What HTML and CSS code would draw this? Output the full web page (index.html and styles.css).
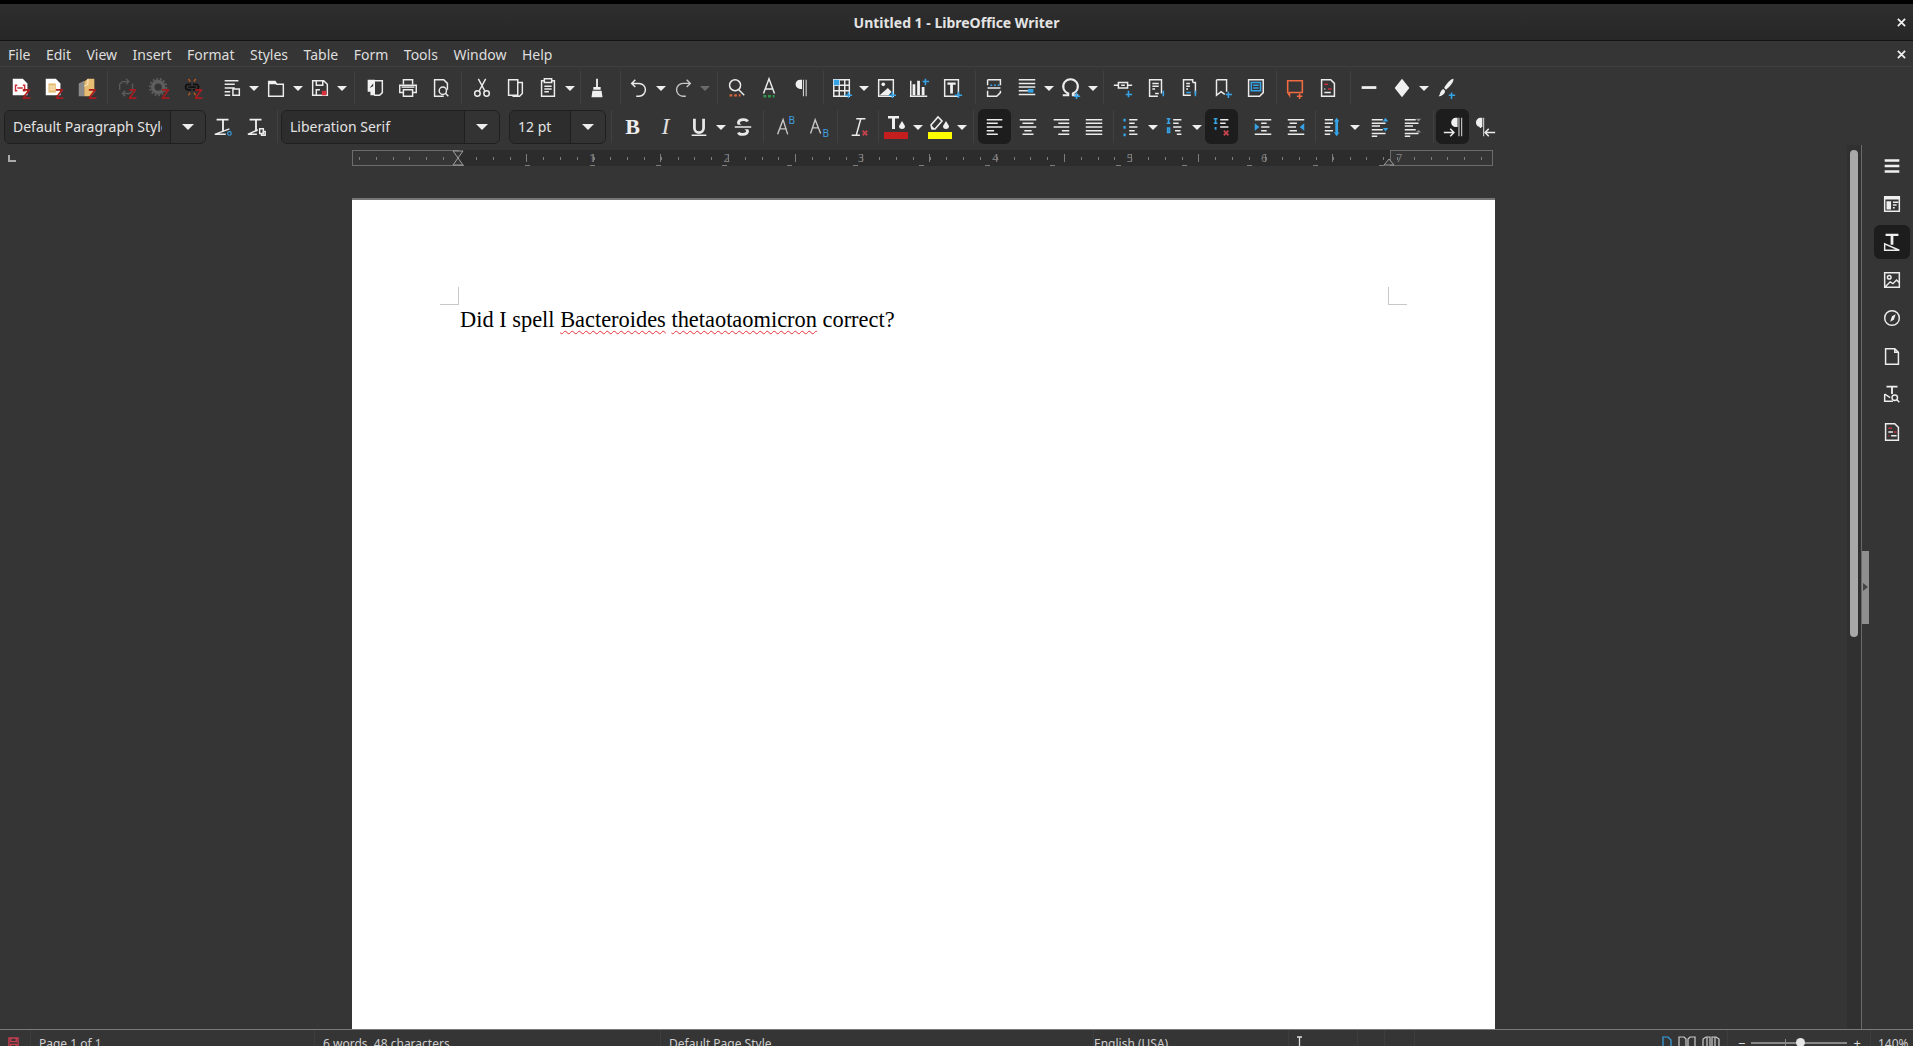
FILE: index.html
```html
<!DOCTYPE html>
<html lang="en">
<head>
<meta charset="UTF-8">
<title>Untitled 1 - LibreOffice Writer</title>
<link rel="stylesheet" href="styles.css">
</head>
<body>
<div class="app">
  <header class="titlebar">
    <span class="title">Untitled 1 - LibreOffice Writer</span>
    <svg class="close" viewBox="0 0 10 10"><path d="M1 1l8 8M9 1l-8 8"/></svg>
  </header>

  <nav class="menubar">
    <span>File</span><span>Edit</span><span>View</span><span>Insert</span><span>Format</span><span>Styles</span><span>Table</span><span>Form</span><span>Tools</span><span>Window</span><span>Help</span>
    <svg class="close close-doc" viewBox="0 0 10 10"><path d="M1 1l8 8M9 1l-8 8"/></svg>
  </nav>

  <!-- standard toolbar -->
  <div class="toolbar tb1">
    <div class="b"><svg viewBox="0 0 24 24"><path class="page-fill" d="M3 2h11l5 5v13H3z"/><path class="red-line" d="M8 9H6v6h2M14 9h2v6h-2M8 12h6"/><text class="zed" x="13" y="24">Z</text></svg></div>
    <div class="b"><svg viewBox="0 0 24 24"><path class="page-fill" d="M3 2h11l5 5v13H3z"/><path class="tan" d="M6 7h8v10H6z"/><path class="tan-line" d="M7 10h6M7 12h6M7 14h6"/><text class="zed" x="13" y="24">Z</text></svg></div>
    <div class="b"><svg viewBox="0 0 24 24"><path class="grey-fill" d="M3 7l6-3v17H3z"/><path class="tan" d="M9 5l4-3h7v15l-4 4H9z"/><path class="tan-line" d="M13 2v6l-4 2"/><text class="zed" x="13" y="24">Z</text></svg></div>
    <i class="sep ml3"></i>
    <div class="b ml3"><svg viewBox="0 0 24 24"><path class="dim" d="M4 14V8l3-3h6M18 7v8l-3 3H8M11 2l3 3-3 3M10 15l-3 3 3 3"/><text class="zed" x="13" y="24">Z</text></svg></div>
    <div class="b"><svg viewBox="0 0 24 24"><circle class="dim-thick" cx="10" cy="11" r="6"/><circle class="dim-dash" cx="10" cy="11" r="9"/><text class="zed" x="13" y="24">Z</text></svg></div>
    <div class="b"><svg viewBox="0 0 24 24"><path class="black-line" d="M10 8H7a3 3 0 0 0 0 6h3M12 8h3a3 3 0 0 1 0 6h-3M7 11h8"/><path class="orange-line" d="M7 2l2 3M15 2l-2 3M7 20l2-3M15 20l-2-3"/><text class="zed" x="13" y="24">Z</text></svg></div>
    <div class="b ml6"><svg viewBox="0 0 24 24"><path class="line" d="M4 4h15M4 8h11M4 12h11M4 16h6M4 20h6M13 13h7v7h-7z"/></svg></div><div class="dd"></div>
    <div class="b"><svg viewBox="0 0 24 24"><path class="line" d="M4 5h7l2 3h7v13H4z"/><path class="solid" d="M4 5h7l2 3H4z"/></svg></div><div class="dd"></div>
    <div class="b"><svg viewBox="0 0 24 24"><path class="line" d="M4 4h12l4 4v12H4zM8 4v5h7V4M8 20v-6h4"/><rect class="red-fill" x="14" y="15" width="5" height="5"/></svg></div><div class="dd"></div>
    <i class="sep ml6"></i>
    <div class="b ml4"><svg viewBox="0 0 24 24"><path class="line" d="M11 4h9v13l-3 3H11"/><path class="solid" d="M4 3h8v13H4zM7 20h5v-4H7z"/><path class="dark" d="M6 12l4-5v3z"/></svg></div>
    <div class="b"><svg viewBox="0 0 24 24"><path class="line" d="M7 8V3h10v5M7 17H3V9h18v8h-4M7 14h10v7H7z"/><path class="line" d="M5 11h14"/></svg></div>
    <div class="b"><svg viewBox="0 0 24 24"><path class="line" d="M15 21H5V3h10l4 4v7"/><circle class="line" cx="14" cy="15" r="4"/><path class="line" d="M17 18l3 3"/></svg></div>
    <i class="sep ml3"></i>
    <div class="b ml4"><svg viewBox="0 0 24 24"><path class="line" d="M8 2l7 13M16 2L9 15"/><circle class="line" cx="7" cy="18" r="3"/><circle class="line" cx="17" cy="18" r="3"/></svg></div>
    <div class="b"><svg viewBox="0 0 24 24"><path class="line" d="M5 3h10v17H5zM15 6h5v12l-3 3h-7v-1"/></svg></div>
    <div class="b"><svg viewBox="0 0 24 24"><path class="line" d="M8 4H5v17h14V4h-3M8 2h8v4H8zM8 10h8M8 13h8M8 16h5"/></svg></div><div class="dd"></div>
    <i class="sep ml4"></i>
    <div class="b"><svg viewBox="0 0 24 24"><path class="solid" d="M11 2h2v9h-2zM8 11h8v3H8zM7 15h10l1 7H6z"/></svg></div>
    <i class="sep ml6"></i>
    <div class="b ml2"><svg viewBox="0 0 24 24"><path class="line" d="M8 3L4 7l4 4M4 7h8a6 6 0 0 1 0 14H9"/></svg></div><div class="dd"></div>
    <div class="b"><svg viewBox="0 0 24 24"><path class="line-soft" d="M16 3l4 4-4 4M20 7h-8a6 6 0 0 0 0 14h3"/></svg></div><div class="dd off"></div>
    <i class="sep ml6"></i>
    <div class="b ml2"><svg viewBox="0 0 24 24"><circle class="line" cx="11" cy="9" r="6"/><path class="line" d="M15 14l6 6"/><path class="orange-dash" d="M5 20h12"/></svg></div>
    <div class="b"><svg viewBox="0 0 24 24"><path class="line" d="M6 18l6-16 6 16M8 13h8"/><path class="green-dash" d="M6 21h12"/></svg></div>
    <div class="b"><svg viewBox="0 0 24 24"><path class="solid" d="M12 3H10a5 5 0 0 0 0 10h2zM13 3h1v18h-1zM16 3h1v18h-1z"/></svg></div>
    <i class="sep ml4"></i>
    <div class="b ml2"><svg viewBox="0 0 24 24"><path class="line" d="M3 3h17v18H3zM3 9h17M3 15h17M9 3v18M15 3v18"/><rect class="blue-fill" x="3" y="3" width="6" height="6"/><path class="blue-line" d="M19 16v7M15 20h8"/></svg></div><div class="dd"></div>
    <div class="b"><svg viewBox="0 0 24 24"><path class="line" d="M4 3h16v18H4z"/><circle class="solid" cx="9" cy="8" r="2"/><path class="solid" d="M5 20l9-8 4 4-3 4z"/><path class="blue-line" d="M19 16v7M15 20h8"/></svg></div>
    <div class="b"><svg viewBox="0 0 24 24"><path class="solid" d="M5 8h3v12H5zM10 4h3v16h-3zM15 11h3v9h-3z"/><path class="line" d="M2 21h19M3 4v17"/><path class="blue-line" d="M19 2v7M16 5h7"/></svg></div>
    <div class="b"><svg viewBox="0 0 24 24"><path class="line" d="M4 3h15v18H4z"/><path class="solid-t" d="M7 6h9v2.500h-3V18h-3V8.500H7z"/><path class="blue-line" d="M19 16v7M15 20h8"/></svg></div>
    <i class="sep ml6"></i>
    <div class="b ml2"><svg viewBox="0 0 24 24"><path class="line" d="M5 3h14v6M5 3v6M5 15v6h10l4-4v-2M5 12h14"/><path class="blue-line" d="M8 9h2M12 9h2M16 9h2" /></svg></div>
    <div class="b"><svg viewBox="0 0 24 24"><path class="line" d="M3 3h18M3 7h18M3 11h18M3 15h10M3 19h18"/><rect class="blue-fill" x="13" y="13" width="6" height="4"/></svg></div><div class="dd"></div>
    <div class="b"><svg viewBox="0 0 24 24"><path class="omega" d="M3 20h6v-2a8 8 0 1 1 5 0v2h6"/><path class="blue-line" d="M18 17v7M15 21h7"/></svg></div><div class="dd"></div>
    <i class="sep ml4"></i>
    <div class="b ml3"><svg viewBox="0 0 24 24"><path class="line" d="M2 9h5M17 9h5M7 6h10v6H7zM10 9h4"/><path class="blue-line" d="M18 15v7M15 19h7"/></svg></div>
    <div class="b"><svg viewBox="0 0 24 24"><path class="line" d="M14 21H5V3h13v15M8 7h7M8 10h7M8 13h3M11 18h4"/><path class="blue-line" d="M20 15v6"/></svg></div>
    <div class="b"><svg viewBox="0 0 24 24"><path class="line" d="M14 20H6V3h10v3M16 6h3v12M9 7h4M9 10h4M9 13h2"/><path class="blue-line" d="M9 17h5M19 15v6"/></svg></div>
    <div class="b"><svg viewBox="0 0 24 24"><path class="line" d="M6 3h11v13M6 3v17l5-4 4 3"/><path class="blue-line" d="M19 16v7M16 19h7"/></svg></div>
    <div class="b"><svg viewBox="0 0 24 24"><path class="line" d="M5 3h16v14l-4 4H5z"/><path class="blue-line" d="M8 6h10v9H8zM10 9h6M10 12h6"/></svg></div>
    <i class="sep ml4"></i>
    <div class="b ml2"><svg viewBox="0 0 24 24"><path class="orange-stroke" d="M4 4h16v13H6v3l-2-3z"/><path class="orange-stroke" d="M17 18v6M14 21h6"/></svg></div>
    <div class="b"><svg viewBox="0 0 24 24"><path class="line" d="M5 3h10l4 4v14H5z"/><path class="red-line" d="M8 8h4M12 13h4"/><path class="line" d="M8 17h7M8 13h1"/></svg></div>
    <i class="sep ml5"></i>
    <div class="b ml2"><svg viewBox="0 0 24 24"><rect class="solid" x="4" y="10" width="16" height="3"/></svg></div>
    <div class="b"><svg viewBox="0 0 24 24"><path class="solid" d="M12 2l8 10-8 10-8-10z"/></svg></div><div class="dd"></div>
    <div class="b"><svg viewBox="0 0 24 24"><path class="solid" d="M20 2c1 3-4 9-8 12l-2-2c2-4 7-10 10-10zM9 13l2 2c0 4-4 6-7 6 2-2 1-6 5-8z"/><path class="blue-line" d="M18 17v7M15 20h7"/></svg></div>
  </div>

  <!-- formatting toolbar -->
  <div class="toolbar tb2">
    <div class="combo combo-style"><span class="combo-text">Default Paragraph Style</span><div class="combo-btn"></div></div>
    <div class="b"><svg viewBox="0 0 24 24"><path class="solid" d="M5 3h13v2h-5v12h-2V5H5z"/><path class="line" d="M3 20l16-6M3 20h12"/><circle class="blue-ring" cx="19" cy="19" r="2"/></svg></div>
    <div class="b"><svg viewBox="0 0 24 24"><path class="solid" d="M5 3h13v2h-5v12h-2V5H5z"/><path class="line" d="M3 20l11-5M3 20h10M16 14h4v5h-4zM19 17h3v4h-4v-2"/></svg></div>
    <i class="sep ml5"></i>
    <div class="combo combo-font ml3"><span class="combo-text">Liberation Serif</span><div class="combo-btn"></div></div>
    <div class="combo combo-size ml9"><span class="combo-text">12 pt</span><div class="combo-btn"></div></div>
    <i class="sep ml5"></i>
    <div class="b ml4 fmt-b">B</div>
    <div class="b fmt-i">I</div>
    <div class="b"><svg viewBox="0 0 24 24"><path class="thick" d="M7 3v10a5 5 0 0 0 10 0V3"/><path class="line" d="M4 21h16"/></svg></div><div class="dd"></div>
    <div class="b"><svg viewBox="0 0 24 24"><path class="thick" d="M17 6c-1-3-9-3-10 1 0 6 10 4 10 10-1 4-9 4-10 1"/><path class="dark-gap" d="M3 12h18"/><path class="line" d="M3 12h18"/></svg></div>
    <i class="sep ml4"></i>
    <div class="b ml3"><svg viewBox="0 0 24 24"><path class="line-soft" d="M5 20l6-16 5 16M7 14h8"/></svg><span class="script sup">B</span></div>
    <div class="b"><svg viewBox="0 0 24 24"><path class="line-soft" d="M5 19l5-15 6 15M7 13h7"/></svg><span class="script sub">B</span></div>
    <i class="sep ml4"></i>
    <div class="b ml4"><svg viewBox="0 0 24 24"><path class="line" d="M9 21L14 3M9 3h10M4 21h9"/><path class="red-x" d="M16 16l5 5M21 16l-5 5"/></svg></div>
    <i class="sep ml3"></i>
    <div class="b"><svg class="swatch-icon" viewBox="0 0 24 24"><path class="solid-t" d="M4 1h11v2.500h-4V14H8V3.500H4z"/><path class="solid" d="M18 6l3 5a3 3 0 0 1-6 0z"/><rect class="color-red" x="0" y="17" width="24" height="7"/></svg></div><div class="dd"></div>
    <div class="b"><svg class="swatch-icon" viewBox="0 0 24 24"><path class="line" d="M3 10l7-8 4 4-7 8H4z"/><path class="solid" d="M3 10l4 4-3 0zM18 6l3 5a3 3 0 0 1-6 0z"/><rect class="color-yellow" x="0" y="17" width="24" height="7"/></svg></div><div class="dd"></div>
    <i class="sep ml6"></i>
    <div class="b ml4 active"><svg viewBox="0 0 24 24"><path class="line" d="M3 4h17M3 8h12M3 12h17M3 16h8M3 20h12"/></svg></div>
    <div class="b"><svg viewBox="0 0 24 24"><path class="line" d="M3 4h18M6 8h12M3 12h18M8 16h8M6 20h12"/></svg></div>
    <div class="b"><svg viewBox="0 0 24 24"><path class="line" d="M4 4h17M9 8h12M4 12h17M13 16h8M9 20h12"/></svg></div>
    <div class="b"><svg viewBox="0 0 24 24"><path class="line" d="M3 4h18M3 8h18M3 12h18M3 16h18M3 20h18"/></svg></div>
    <i class="sep ml3"></i>
    <div class="b"><svg viewBox="0 0 24 24"><path class="blue-dots" d="M5 3v3M5 11v3M5 19v3"/><path class="line" d="M10 4h9M10 8h6M10 12h9M10 16h6M10 20h9"/></svg></div><div class="dd"></div>
    <div class="b"><svg viewBox="0 0 24 24"><path class="blue-line" d="M3 3h4M5 3v5M3 8h4M3 13h4M3 18h4M4 13v5M6 13v5"/><path class="line" d="M10 4h9M10 8h6M10 12h9M12 16h6M14 20h5"/></svg></div><div class="dd"></div>
    <div class="b ml3 active"><svg viewBox="0 0 24 24"><path class="blue-line" d="M3 3h4M5 3v5M3 8h4"/><rect class="blue-fill" x="4" y="12" width="2" height="3"/><path class="line" d="M10 4h9M10 8h6M10 12h9"/><path class="red-x" d="M14 16l5 5M19 16l-5 5"/></svg></div>
    <div class="b ml8"><svg viewBox="0 0 24 24"><path class="line" d="M3 4h18M10 8h6M10 12h9M10 16h6M3 20h18"/><path class="blue-fill" d="M3 8l5 4-5 4z"/></svg></div>
    <div class="b"><svg viewBox="0 0 24 24"><path class="line" d="M3 4h18M5 8h8M3 12h9M5 16h8M3 20h18"/><path class="blue-fill" d="M21 8l-5 4 5 4z"/></svg></div>
    <i class="sep ml3"></i>
    <div class="b"><svg viewBox="0 0 24 24"><path class="line" d="M3 4h9M3 8h9M3 12h6M3 16h9M3 20h6"/><path class="blue-thick" d="M16 5v14"/><path class="blue-fill" d="M13 6l3-4 3 4zM13 18l3 4 3-4z"/></svg></div><div class="dd"></div>
    <div class="b ml3"><svg viewBox="0 0 24 24"><path class="line" d="M3 4h12M3 8h15M3 11h9M3 15h12M3 19h15M3 22h6"/><path class="blue-fill" d="M18 2l3 4h-6zM18 17l3-4h-6z"/></svg></div>
    <div class="b"><svg viewBox="0 0 24 24"><path class="line" d="M3 4h12M3 8h15M3 11h9M3 15h12M3 19h15M3 22h6"/><path class="grey-fill" d="M15 3h6l-3 3zM15 18h6l-3-3z"/></svg></div>
    <i class="sep ml4"></i>
    <div class="b ml2 active"><svg viewBox="0 0 24 24"><path class="solid" d="M17 2h-2a5 5 0 0 0 0 10h2zM18 2h1v20h-1zM21 2h1v20h-1z"/><path class="line" d="M2 18h11M9 14l4 4-4 4"/></svg></div>
    <div class="b"><svg viewBox="0 0 24 24"><path class="solid" d="M8 2H6a5 5 0 0 0 0 10h2zM9 2h1v20H9zM5 2h1"/><path class="line" d="M22 18H11M15 14l-4 4 4 4M6 12v1"/></svg></div>
  </div>

  <main class="work">
    <div class="doc">
      <svg class="corner-mark" viewBox="0 0 8 7"><path d="M1 0v6h7"/></svg>
      <div class="ruler">
        <div class="ruler-margin ruler-left"></div>
        <div class="ruler-body">
          <span class="num">1</span><span class="num">2</span><span class="num">3</span><span class="num">4</span><span class="num">5</span><span class="num">6</span>
        </div>
        <div class="ruler-margin ruler-right"><span class="num num-7">7</span></div>
        <svg class="marker marker-left" viewBox="0 0 12 16"><path d="M1 1h10L6 8zM1 15h10L6 8z"/></svg>
        <svg class="marker marker-right" viewBox="0 0 12 8"><path d="M1 7h10L6 1z"/></svg>
      </div>
      <div class="page">
        <i class="crop crop-left"></i>
        <i class="crop crop-right"></i>
        <p class="body-text">Did I spell <span class="misspelt">Bacteroides</span> <span class="misspelt">thetaotaomicron</span> correct?</p>
      </div>
    </div>
    <div class="scrollbar"><div class="thumb"></div></div>
    <aside class="sidebar">
      <div class="handle"></div>
      <div class="side-btn"><svg viewBox="0 0 24 24"><path class="thick-side" d="M4 6h16M4 12h16M4 18h16"/></svg></div>
      <div class="side-btn"><svg viewBox="0 0 24 24"><path class="line" d="M4 4h16v16H4z"/><path class="solid" d="M4 4h16v3H4zM6 9h5v9H6z"/><path class="line" d="M13 10h6M13 13h4M13 16h2"/></svg></div>
      <div class="side-btn active"><svg viewBox="0 0 24 24"><path class="solid" d="M5 3h14v2.500h-5.500V15h-3V5.500H5z"/><path class="line" d="M4 14v7h16zM4 21h16"/></svg></div>
      <div class="side-btn"><svg viewBox="0 0 24 24"><path class="line" d="M4 4h16v16H4zM5 19l5-5 3 2 4-4 3 3"/><circle class="line" cx="9" cy="9" r="2"/></svg></div>
      <div class="side-btn"><svg viewBox="0 0 24 24"><circle class="line" cx="12" cy="12" r="8"/><path class="solid" d="M16 8l-2 6-4 2 2-6z"/></svg></div>
      <div class="side-btn"><svg viewBox="0 0 24 24"><path class="line" d="M5 4h10l4 4v13H5zM15 4v4h4"/></svg></div>
      <div class="side-btn"><svg viewBox="0 0 24 24"><path class="solid" d="M6 3h12v2h-5v7h-2V5H6z"/><path class="line" d="M4 12v8h9M4 12l6 4"/><circle class="line" cx="15" cy="16" r="3"/><path class="line" d="M17 18l3 3"/></svg></div>
      <div class="side-btn"><svg viewBox="0 0 24 24"><path class="line" d="M5 3h10l4 4v14H5z"/><path class="red-line" d="M8 8h4M14 12h3M8 16h1"/><path class="line" d="M8 12h5M11 16h6"/></svg></div>
    </aside>
  </main>

  <footer class="statusbar">
    <div class="st st-save"><svg viewBox="0 0 12 14"><path d="M1 1h10v12H1zM3 1v4h6V1M3 13V8h6v5"/></svg></div>
    <div class="st st-page">Page 1 of 1</div>
    <div class="st st-words">6 words, 48 characters</div>
    <div class="st st-style">Default Page Style</div>
    <div class="st st-lang">English (USA)</div>
    <div class="st st-insert"><svg viewBox="0 0 14 14"><path d="M2 1h5M4.500 1v11M2 12h5M9 10v2h4v-2"/></svg></div>
    <div class="st st-blank1"></div>
    <div class="st st-blank2"></div>
    <div class="st st-views">
      <svg class="view-on" viewBox="0 0 10 14"><path d="M1 1h5l3 3v9H1z"/></svg>
      <svg viewBox="0 0 18 14"><path d="M1 13V1h5l2 2v10zM10 13V3l2-2h5v12z"/></svg>
      <svg viewBox="0 0 18 14"><path d="M1 13V3l3-2h4v12zM10 13V1h4l3 2v10zM5 1v12M13 1v12"/></svg>
    </div>
    <div class="st st-zoom">
      <span class="zoom-sign">−</span>
      <div class="slider"><i class="slider-mid"></i><i class="slider-thumb"></i></div>
      <span class="zoom-sign">+</span>
    </div>
    <div class="st st-pct">140%</div>
  </footer>
</div>
</body>
</html>
```

FILE: styles.css
```css
* {
  box-sizing: border-box;
}
html, body {
  margin: 0;
  height: 100%;
  overflow: hidden;
}
body {
  background: #353535;
  color: #dedede;
  font-family: "Noto Sans", sans-serif;
  font-size: 14px;
}
.app {
  display: flex;
  flex-direction: column;
  height: 1046px;
  overflow: hidden;
}

/* title + menu */
.titlebar {
  flex: none;
  position: relative;
  display: flex;
  align-items: center;
  justify-content: center;
  height: 41px;
  border-top: 4px solid #000;
  border-bottom: 1px solid #141414;
  background: linear-gradient(#2e2e2e, #272727);
}
.title {
  font-weight: 700;
  font-size: 14px;
  color: #e4e4e4;
}
.close {
  position: absolute;
  right: 7px;
  top: 14px;
  width: 9px;
  height: 9px;
  fill: none;
  stroke: #eee;
  stroke-width: 2;
}
.close-doc {
  top: 9px;
}
.menubar {
  flex: none;
  position: relative;
  display: flex;
  align-items: center;
  gap: 15.500px;
  height: 26px;
  padding: 2px 0 0 8px;
  border-bottom: 1px solid #3f3f3f;
  white-space: nowrap;
}

/* toolbars */
.toolbar {
  flex: none;
  display: flex;
  align-items: center;
  padding-left: 4px;
}
.tb1 {
  height: 41px;
  padding-left: 4.500px;
}
.tb2 {
  height: 37px;
}
.b {
  flex: none;
  position: relative;
  display: flex;
  align-items: center;
  justify-content: center;
  width: 33px;
  height: 35px;
  border-radius: 6px;
}
.b svg {
  width: 22px;
  height: 22px;
  overflow: visible;
}
.b.active {
  background: #1d1d1d;
}
.dd {
  flex: none;
  width: 11px;
  height: 20px;
  position: relative;
}
.dd::after {
  content: "";
  position: absolute;
  left: 0.500px;
  top: 8px;
  border: 5px solid transparent;
  border-top: 5px solid #eee;
  border-bottom: 0;
}
.dd.off::after {
  border-top-color: #6a6a6a;
}
.sep {
  flex: none;
  display: block;
  width: 1px;
  height: 33px;
  background: #414141;
}
.ml2 { margin-left: 2px; }
.ml3 { margin-left: 3px; }
.ml4 { margin-left: 4px; }
.ml5 { margin-left: 5px; }
.ml6 { margin-left: 6px; }
.ml8 { margin-left: 8px; }
.ml9 { margin-left: 9px; }

.combo {
  flex: none;
  display: flex;
  height: 34px;
  border: 1px solid #1f1f1f;
  border-radius: 6px;
  background: #2d2d2d;
  overflow: hidden;
}
.combo-style { width: 202px; }
.combo-font { width: 219px; }
.combo-size { width: 97px; }
.combo-text {
  flex: 1;
  min-width: 0;
  padding: 0 0 0 8px;
  line-height: 32px;
  white-space: nowrap;
  overflow: hidden;
  color: #e3e3e3;
  background: #2d2d2d;
}
.combo-btn {
  flex: none;
  position: relative;
  width: 35px;
  border-left: 1px solid #1f1f1f;
  background: #333;
}
.combo-btn::after {
  content: "";
  position: absolute;
  left: 11px;
  top: 13px;
  border: 6px solid transparent;
  border-top: 6px solid #eee;
  border-bottom: 0;
}
.combo-style .combo-text { margin-right: 8px; }

.fmt-b {
  font-family: "Liberation Serif", serif;
  font-weight: 700;
  font-size: 22px;
  color: #eee;
}
.fmt-i {
  font-family: "Liberation Serif", serif;
  font-style: italic;
  font-size: 24px;
  color: #ddd;
}
.script {
  position: absolute;
  font-size: 10px;
  line-height: 1;
  color: #3f9fe0;
}
.sup { right: 5px; top: 6px; }
.sub { right: 4px; bottom: 6px; }

/* svg paint */
svg path, svg rect, svg circle {
  vector-effect: none;
}
.line { fill: none; stroke: #ececec; stroke-width: 1.600; }
.line-soft { fill: none; stroke: #c8c8c8; stroke-width: 1.500; }
.thick { fill: none; stroke: #e8e8e8; stroke-width: 3; }
.thick-side { fill: none; stroke: #f0f0f0; stroke-width: 2.500; }
.solid { fill: #f0f0f0; }
.solid-t { fill: #f0f0f0; }
.dark { fill: #333; }
.dark-gap { fill: none; stroke: #353535; stroke-width: 5; }
.page-fill { fill: #fff; }
.grey-fill { fill: #8a8a8a; }
.tan { fill: #e7bd73; }
.tan-line { fill: none; stroke: #fff2d0; stroke-width: 1; }
.red-line { fill: none; stroke: #c8303c; stroke-width: 1.600; }
.red-fill { fill: #d8303c; }
.red-x { fill: none; stroke: #c4424e; stroke-width: 2; }
.blue-line { fill: none; stroke: #36a3e6; stroke-width: 1.700; }
.blue-thick { fill: none; stroke: #36a3e6; stroke-width: 3; }
.blue-dots { fill: none; stroke: #36a3e6; stroke-width: 2.500; }
.blue-fill { fill: #36a3e6; }
.blue-ring { fill: none; stroke: #36a3e6; stroke-width: 1.200; }
.dim { fill: none; stroke: #5a5a5a; stroke-width: 1.500; }
.dim-thick { fill: none; stroke: #5e5e5e; stroke-width: 4; }
.dim-dash { fill: none; stroke: #5e5e5e; stroke-width: 2; stroke-dasharray: 2 2; }
.black-line { fill: none; stroke: #111; stroke-width: 2; }
.orange-line { fill: none; stroke: #b35a20; stroke-width: 1.500; }
.orange-dash { fill: none; stroke: #d9643a; stroke-width: 2.500; stroke-dasharray: 3 2; }
.green-dash { fill: none; stroke: #2f9a4e; stroke-width: 2.500; stroke-dasharray: 3 2; }
.orange-stroke { fill: none; stroke: #f06a42; stroke-width: 1.700; }
.omega { fill: none; stroke: #ececec; stroke-width: 2.200; }
.color-red { fill: #c41e1e; }
.color-yellow { fill: #ffff00; }
.zed {
  font-family: "Liberation Sans", sans-serif;
  font-weight: 700;
  font-size: 15px;
  fill: #a31a1f;
}
.b .swatch-icon {
  width: 24px;
  height: 24px;
}

/* document area */
.work {
  flex: 1;
  display: flex;
  min-height: 0;
}
.doc {
  flex: 1;
  position: relative;
  min-width: 0;
  padding: 5px 0 0 352px;
  overflow: hidden;
}
.corner-mark {
  position: absolute;
  left: 8px;
  top: 10px;
  width: 8px;
  height: 7px;
  fill: none;
  stroke: #aaa;
  stroke-width: 2;
}
.ruler {
  position: relative;
  display: flex;
  width: 1141px;
  height: 16px;
}
.ruler-margin {
  position: relative;
  flex: none;
  border: 1px solid #6c6c6c;
  background-image: repeating-linear-gradient(90deg, #7d7d7d 0 1px, transparent 1px 16.800px);
  background-repeat: no-repeat;
  background-size: 100% 3px;
  background-position: 6px center;
}
.ruler-left { width: 107px; }
.ruler-right { width: 103px; }
.ruler-body {
  flex: none;
  position: relative;
  display: flex;
  width: 931px;
  background-color: #2c2c2c;
  background-image:
    repeating-linear-gradient(90deg, #7d7d7d 0 1px, transparent 1px 67.200px),
    repeating-linear-gradient(90deg, #7d7d7d 0 1px, transparent 1px 16.800px),
    repeating-linear-gradient(90deg, #7d7d7d 0 5px, transparent 5px 65.700px);
  background-repeat: no-repeat;
  background-size: 100% 8px, 100% 3px, 100% 1px;
  background-position: 67.200px center, 16.800px center, 0 15px;
}
.num {
  flex: none;
  width: 134.400px;
  padding-left: 130px;
  font-size: 11px;
  line-height: 16px;
  color: #7a7a7a;
}
.num-7 {
  position: absolute;
  left: 5px;
  top: -1px;
  width: auto;
  padding: 0;
}
.marker {
  position: absolute;
  fill: #353535;
  stroke: #a0a0a0;
  stroke-width: 1;
}
.marker-left {
  left: 100px;
  top: 0;
  width: 12px;
  height: 16px;
}
.marker-right {
  left: 1031px;
  top: 8px;
  width: 12px;
  height: 8px;
}
.page {
  position: relative;
  width: 1143px;
  height: 860px;
  margin-top: 32px;
  padding: 107px 0 0 108px;
  border-top: 2px solid #777;
  background: #fff;
}
.body-text {
  margin: 0;
  font-family: "Liberation Serif", serif;
  font-size: 22.400px;
  line-height: 26px;
  color: #000;
  white-space: nowrap;
}
.misspelt {
  text-decoration: underline wavy #e8303a 1px;
  text-underline-offset: 3px;
}
.crop {
  position: absolute;
  top: 87px;
  width: 19px;
  height: 18px;
  border-bottom: 1px solid #c8c8c8;
}
.crop-left {
  left: 88px;
  border-right: 1px solid #c8c8c8;
}
.crop-right {
  left: 1036px;
  border-left: 1px solid #c8c8c8;
}

/* scrollbar + deck */
.scrollbar {
  flex: none;
  width: 14px;
  padding: 5px 3px 0;
  background: #303030;
}
.thumb {
  width: 8px;
  height: 487px;
  border-radius: 4px;
  background: #a8a8a8;
}
.sidebar {
  flex: none;
  position: relative;
  width: 52px;
  border-left: 1px solid #6a6a6a;
}
.handle {
  position: absolute;
  left: 0;
  top: 406px;
  width: 7px;
  height: 73px;
  background: #8f8f8f;
}
.handle::after {
  content: "";
  position: absolute;
  left: 1px;
  top: 32px;
  border: 4px solid transparent;
  border-left: 5px solid #444;
  border-right: 0;
}
.side-btn {
  display: flex;
  align-items: center;
  justify-content: center;
  width: 36px;
  height: 34px;
  margin: 4px 0 4px 12px;
  border-radius: 6px;
}
.side-btn svg {
  width: 22px;
  height: 22px;
}
.side-btn.active {
  background: #1d1d1d;
}

/* status bar */
.statusbar {
  flex: none;
  display: flex;
  align-items: flex-start;
  height: 17px;
  overflow: hidden;
  border-top: 1px solid #7a7a7a;
  background: #353535;
  font-size: 12px;
  color: #cfcfcf;
  white-space: nowrap;
}
.st {
  flex: none;
  display: flex;
  align-items: center;
  height: 26px;
  padding-left: 8px;
  border-right: 1px solid #3d3d3d;
}
.st-save { width: 31px; }
.st-save svg {
  width: 11px;
  height: 13px;
  fill: none;
  stroke: #c83c50;
  stroke-width: 1.500;
}
.st-page { width: 284px; }
.st-words { width: 346px; }
.st-style { width: 433px; }
.st-lang { width: 195px; padding-left: 0; }
.st-insert { width: 69px; padding-left: 6px; }
.st-insert svg {
  width: 14px;
  height: 14px;
  fill: none;
  stroke: #ddd;
  stroke-width: 1.300;
}
.st-blank1 { width: 27px; }
.st-blank2 { width: 30px; }
.st-views {
  width: 313px;
  gap: 6px;
  justify-content: flex-end;
  padding-right: 7px;
}
.st-views svg {
  width: 18px;
  height: 14px;
  fill: none;
  stroke: #ccc;
  stroke-width: 1.200;
}
.st-views .view-on {
  width: 10px;
  stroke: #36a3e6;
}
.st-zoom {
  width: 143px;
  gap: 6px;
  padding-left: 10px;
}
.zoom-sign {
  font-size: 13px;
  color: #ddd;
}
.slider {
  position: relative;
  width: 96px;
  height: 2px;
  background: #888;
}
.slider-mid {
  position: absolute;
  left: 34px;
  top: -3px;
  width: 1px;
  height: 8px;
  background: #888;
}
.slider-thumb {
  position: absolute;
  left: 45px;
  top: -4px;
  width: 9px;
  height: 9px;
  border-radius: 50%;
  background: #e6e6e6;
}
.st-pct {
  padding-left: 7px;
  border-right: 0;
}
```
